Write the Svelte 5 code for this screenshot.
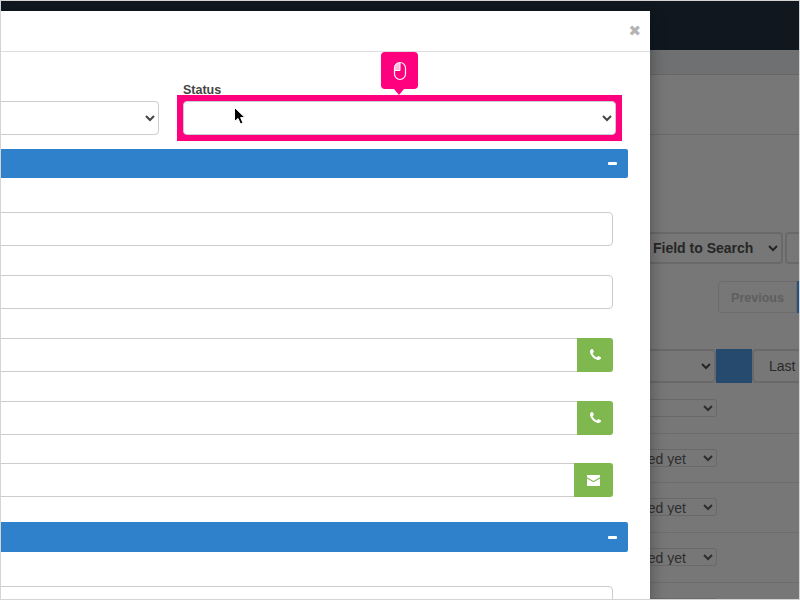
<script>
  // rows of the list behind the modal
  const rows = [
    { height: 50, label: "" },
    { height: 49, label: "Not contacted yet" },
    { height: 50, label: "Not contacted yet" },
    { height: 50, label: "Not contacted yet" },
    { height: 50, label: "" }
  ];

  const phonePath =
    "M1408 1112q0 27-10 70.5t-21 68.5q-21 50-122 106-94 51-186 51-27 0-53-3.5t-57.5-12.5-47-14.5-55.5-20.5-49-18q-98-35-175-83-127-79-264-216t-216-264q-48-77-83-175-3-9-18-49t-20.5-55.5-14.5-47-12.5-57.5-3.5-53q0-92 51-186 56-101 106-122 25-11 68.5-21t70.5-10q14 0 21 3 18 6 53 76 11 19 30 54t35 63.5 31 53.5q3 4 17.5 25t21.5 35.5 7 28.5q0 20-28.5 50t-62 55-62 53-28.5 46q0 9 5 22.5t8.5 20.5 14 24 11.5 19q76 137 174 235t235 174q2 1 19 11.5t24 14 20.5 8.5 22.5 5q18 0 46-28.5t53-62 55-62 50-28.5q14 0 28.5 7t35.5 21.5 25 17.5q25 15 53.5 31t63.5 35 54 30q70 35 76 53 3 7 3 21z";
</script>

<div class="stage">
  <!-- page behind the modal, only the part right of it shows -->
  <div class="page">
    <div class="nav"></div>
    <div class="strip"></div>
    <div class="head"></div>
    <div class="search">
      <select class="field-select"><option>Field to Search</option></select>
      <div class="search-box"></div>
    </div>
    <div class="pager">
      <div class="prev">Previous</div>
      <div class="current"></div>
    </div>
    <div class="filters">
      <select class="filter-select"><option></option></select>
      <div class="filter-blue"></div>
      <div class="filter-last">Last</div>
    </div>
    {#each rows as row}
      <div class="row" style="height: {row.height}px">
        <select class="row-select"><option>{row.label}</option></select>
      </div>
    {/each}
  </div>

  <div class="modal">
    <div class="modal-header">
      <span class="close">✖</span>
    </div>
    <div class="modal-body">
      <div class="form-row">
        <div class="col first">
          <select class="control"><option></option></select>
        </div>
        <div class="col second">
          <label for="status">Status</label>
          <div class="highlight">
            <select id="status" class="control"><option></option></select>
          </div>
        </div>
      </div>

      <div class="section first-section"><span class="minus"></span></div>

      <div class="input-row first-input"><div class="input"></div></div>
      <div class="input-row"><div class="input"></div></div>
      <div class="input-row">
        <div class="input"></div>
        <div class="addon">
          <svg width="11" height="13" viewBox="0 128 1408 1408" fill="#fff"><path d={phonePath} /></svg>
        </div>
      </div>
      <div class="input-row">
        <div class="input"></div>
        <div class="addon">
          <svg width="11" height="13" viewBox="0 128 1408 1408" fill="#fff"><path d={phonePath} /></svg>
        </div>
      </div>
      <div class="input-row last-input">
        <div class="input"></div>
        <div class="addon wide">
          <svg width="13" height="11" viewBox="0 0 13 11" fill="#fff">
            <path d="M0 0h13v2.2L6.5 6 0 2.2z" />
            <path d="M0 3.4 6.5 7.2 13 3.4V11H0z" />
          </svg>
        </div>
      </div>

      <div class="section second-section"><span class="minus"></span></div>

      <div class="input-row first-input"><div class="input"></div></div>
    </div>
  </div>

  <!-- guided tour callout -->
  <div class="callout">
    <svg width="14" height="20" viewBox="0 0 14 20">
      <path d="M7 1.5C4 1.5 2 3.5 2 6.5V9.5H7z" fill="#ffb8da" />
      <rect x="1.5" y="1.5" width="11" height="17" rx="5.5" fill="none" stroke="#fff" stroke-width="1.2" />
      <path d="M7 1.5V9.5H1.5" fill="none" stroke="#fff" stroke-width="1" />
    </svg>
  </div>

  <svg class="cursor" width="14" height="20" viewBox="0 0 14 20">
    <path d="M1.5 1.5V15.5L5 12.5 7.5 18 10 17 7.6 11.6H12z" fill="#000" stroke="#fff" stroke-width="1" />
  </svg>

  <div class="frame"></div>
</div>

<style>
  :global(body) {
    margin: 0;
    font-family: "Liberation Sans", Arial, sans-serif;
  }

  .stage {
    position: relative;
    width: 800px;
    height: 600px;
    overflow: hidden;
    background: #777;
  }

  /* background page */
  .page {
    height: 100%;
    overflow: hidden;
  }

  .nav {
    height: 50px;
    background: #10171f;
  }

  .strip {
    height: 24px;
    background: #6f7071;
    border-bottom: 1px solid #666;
  }

  .head {
    height: 59px;
    border-bottom: 1px solid #6a6a6a;
  }

  .search {
    display: flex;
    gap: 2px;
    margin-top: 97px;
    margin-left: 550px;
  }

  .field-select {
    flex: none;
    width: 233px;
    height: 32px;
    padding-left: 97px;
    background: #777;
    border: 2px solid #696969;
    border-radius: 4px;
    color: #262626;
    font: bold 14px "Liberation Sans", sans-serif;
  }

  .search-box {
    flex: none;
    width: 60px;
    height: 28px;
    border: 2px solid #696969;
    border-radius: 4px;
  }

  .pager {
    display: flex;
    margin-top: 17px;
    margin-left: 718px;
  }

  .prev {
    flex: none;
    width: 77px;
    height: 30px;
    border: 1px solid #6c6c6c;
    border-radius: 4px 0 0 4px;
    color: #5e5e5e;
    font-size: 12.5px;
    font-weight: bold;
    line-height: 32px;
    text-align: center;
  }

  .current {
    flex: none;
    width: 10px;
    height: 32px;
    background: #25527d;
  }

  .filters {
    display: flex;
    margin-top: 36px;
    margin-bottom: 1px;
    margin-left: 500px;
    height: 34px;
  }

  .filter-select {
    flex: none;
    width: 216px;
    height: 34px;
    background: #777;
    border: 2px solid #696969;
    border-radius: 4px;
    color: #262626;
  }

  .filter-blue {
    flex: none;
    width: 36px;
    background: #254a6e;
  }

  .filter-last {
    flex: none;
    width: 100px;
    box-sizing: border-box;
    padding-left: 15px;
    border: 2px solid #696969;
    border-radius: 4px;
    color: #2a2a2a;
    font-size: 14px;
    line-height: 30px;
  }

  .row {
    box-sizing: border-box;
    padding-top: 15px;
    margin-left: 500px;
    border-bottom: 1px solid #6c6c6c;
  }

  .row-select {
    display: block;
    width: 217px;
    height: 18px;
    padding-left: 72px;
    background: #777;
    border: 1px solid #696969;
    border-radius: 3px;
    color: #2e2e2e;
    font: 14px "Liberation Sans", sans-serif;
  }

  /* modal */
  .modal {
    position: absolute;
    top: 11px;
    left: 0;
    bottom: 0;
    width: 650px;
    overflow: hidden;
    background: #fff;
    box-shadow: 0 5px 15px rgba(0, 0, 0, 0.35);
  }

  .modal-header {
    display: flex;
    justify-content: flex-end;
    align-items: center;
    box-sizing: border-box;
    height: 41px;
    padding-right: 9px;
    border-bottom: 1px solid #ddd;
  }

  .close {
    color: #b4b4b4;
    font-family: "DejaVu Sans", sans-serif;
    font-size: 15px;
    line-height: 40px;
  }

  .modal-body {
    padding-right: 22px;
  }

  .form-row {
    display: flex;
    align-items: flex-end;
    gap: 24px;
    padding-top: 31px;
    padding-right: 12px;
  }

  .col {
    display: flex;
    flex-direction: column;
  }

  .col.first {
    width: 159px;
    flex: none;
  }

  .col.first select {
    margin-left: -10px;
    width: 169px;
  }

  .col.second {
    flex: 1;
  }

  label {
    margin-bottom: 4px;
    color: #444;
    font-size: 12.5px;
    font-weight: bold;
    line-height: 14px;
  }

  .control {
    height: 34px;
    box-sizing: border-box;
    padding: 0 8px;
    background: #fff;
    border: 1px solid #ccc;
    border-radius: 4px;
    color: #444;
    font: 14px "Liberation Sans", sans-serif;
  }

  .highlight {
    display: flex;
    background: #ff007f;
    outline: 6px solid #ff007f;
  }

  .highlight select {
    flex: 1;
  }

  .section {
    height: 29px;
    display: flex;
    justify-content: flex-end;
    align-items: center;
    padding-right: 11px;
    background: #2e81ca;
    border-radius: 0 2px 2px 0;
  }

  .first-section {
    margin-top: 14px;
  }

  .second-section {
    height: 30px;
    margin-top: 25px;
  }

  .minus {
    width: 9px;
    height: 3px;
    background: #fff;
    border-radius: 1px;
  }

  .input-row {
    display: flex;
    height: 34px;
    margin-top: 29px;
    margin-right: 15px;
  }

  .first-input {
    margin-top: 34px;
  }

  .last-input {
    margin-top: 28px;
  }

  .input {
    flex: 1;
    margin-left: -10px;
    background: #fff;
    border: 1px solid #ccc;
    border-radius: 4px;
  }

  .input-row:has(.addon) .input {
    border-radius: 4px 0 0 4px;
    border-right: 0;
  }

  .addon {
    display: flex;
    justify-content: center;
    align-items: center;
    width: 36px;
    background: #7eb84e;
    border-radius: 0 3px 3px 0;
  }

  .addon.wide {
    width: 39px;
  }

  /* tour callout, sits over the modal */
  .callout {
    position: absolute;
    top: 52px;
    left: 381px;
    display: flex;
    justify-content: center;
    align-items: center;
    width: 37px;
    height: 37px;
    background: #ff007f;
    border-radius: 4px;
  }

  .callout::after {
    content: "";
    position: absolute;
    top: 37px;
    left: 13px;
    border: 5px solid transparent;
    border-top: 6px solid #ff007f;
    border-bottom: 0;
  }

  .cursor {
    position: absolute;
    top: 106px;
    left: 233px;
  }

  .frame {
    position: absolute;
    inset: 0;
    border: 1px solid #d4d4d4;
    pointer-events: none;
  }
</style>
